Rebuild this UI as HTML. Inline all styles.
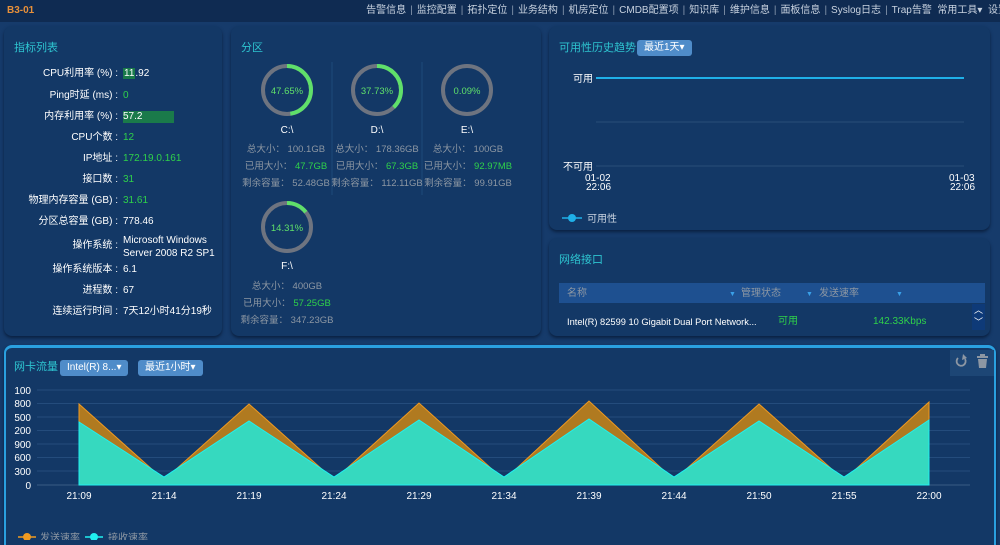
<!DOCTYPE html>
<html><head><meta charset="utf-8"><style>
*{margin:0;padding:0;box-sizing:border-box}
body{width:1000px;height:540px;overflow:hidden;background:#163b6b;font-family:"Liberation Sans","Noto Sans CJK SC",sans-serif;font-size:10px;color:#fff;position:relative}
.top{position:absolute;left:0;top:0;width:1000px;height:22px;background:#0f2b52}
.top .t{position:absolute;left:7px;top:5px;color:#e8903a;font-weight:bold;font-size:10px}
.nav{position:absolute;right:-8px;top:5px;color:#c9d3e0;font-size:10px;white-space:nowrap;line-height:12px}
.nav span{color:#8a9ab0;margin:0 4px}
.p{position:absolute;background:#133866;border-radius:8px;box-shadow:0 2px 3px #0a2040}
.h{position:absolute;color:#2ec4d0;font-size:11px;line-height:14px}
.a{position:absolute;white-space:nowrap;line-height:12px}
.r{position:absolute;text-align:right;width:118px;left:0}
.g{color:#2fd14a}.gr{color:#8d97a3}
.btn{position:absolute;background:#4f8cc9;border-radius:3px;color:#fff;font-size:10px;height:16px;line-height:16px;padding:0 7px}
</style></head><body>
<div class="top"><div class="t">B3-01</div>
<div class="nav">告警信息<span>|</span>监控配置<span>|</span>拓扑定位<span>|</span>业务结构<span>|</span>机房定位<span>|</span>CMDB配置项<span>|</span>知识库<span>|</span>维护信息<span>|</span>面板信息<span>|</span>Syslog日志<span>|</span>Trap告警 &nbsp;常用工具▾ &nbsp;设置</div></div>

<div class="p" style="left:4px;top:26px;width:218px;height:310px">
<div class="h" style="left:10px;top:15px">指标列表</div>
</div>
<div style="position:absolute;left:0;top:0">
<div class="r a" style="top:68px">CPU利用率 (%) :</div><div class="a" style="left:123px;top:68px"><span style="background:#1a7a4a;padding:0 1px">11</span>.92</div>
<div class="r a" style="top:90px">Ping时延 (ms) :</div><div class="a g" style="left:123px;top:90px">0</div>
<div class="r a" style="top:111px">内存利用率 (%) :</div><div class="a" style="left:123px;top:111px;background:#1a7a4a;width:51px">57.2</div>
<div class="r a" style="top:132px">CPU个数 :</div><div class="a g" style="left:123px;top:132px">12</div>
<div class="r a" style="top:153px">IP地址 :</div><div class="a g" style="left:123px;top:153px">172.19.0.161</div>
<div class="r a" style="top:174px">接口数 :</div><div class="a g" style="left:123px;top:174px">31</div>
<div class="r a" style="top:195px">物理内存容量 (GB) :</div><div class="a g" style="left:123px;top:195px">31.61</div>
<div class="r a" style="top:216px">分区总容量 (GB) :</div><div class="a" style="left:123px;top:216px">778.46</div>
<div class="r a" style="top:240px">操作系统 :</div><div class="a" style="left:123px;top:234px;line-height:13px">Microsoft Windows<br>Server 2008 R2 SP1</div>
<div class="r a" style="top:264px">操作系统版本 :</div><div class="a" style="left:123px;top:264px">6.1</div>
<div class="r a" style="top:285px">进程数 :</div><div class="a" style="left:123px;top:285px">67</div>
<div class="r a" style="top:306px">连续运行时间 :</div><div class="a" style="left:123px;top:306px">7天12小时41分19秒</div>
</div>

<div class="p" style="left:231px;top:26px;width:310px;height:310px">
<div class="h" style="left:10px;top:15px">分区</div>
</div>
<svg style="position:absolute;left:0;top:0" width="1000" height="540">
<g fill="none" stroke-width="4">
<circle cx="287" cy="90" r="24" stroke="#6e7480"/><circle cx="287" cy="90" r="24" stroke="#5fe06a" stroke-dasharray="71.9 200" transform="rotate(-90 287 90)"/>
<circle cx="377" cy="90" r="24" stroke="#6e7480"/><circle cx="377" cy="90" r="24" stroke="#5fe06a" stroke-dasharray="56.9 200" transform="rotate(-90 377 90)"/>
<circle cx="467" cy="90" r="24" stroke="#6e7480"/>
<circle cx="287" cy="227" r="24" stroke="#6e7480"/><circle cx="287" cy="227" r="24" stroke="#5fe06a" stroke-dasharray="21.6 200" transform="rotate(-90 287 227)"/>
</g>
<line x1="332" y1="62" x2="332" y2="195" stroke="#1e4a7a"/><line x1="422" y1="62" x2="422" y2="195" stroke="#1e4a7a"/>
<g font-size="9.5" fill="#5fe06a" text-anchor="middle"><text x="287" y="94">47.65%</text><text x="377" y="94">37.73%</text><text x="467" y="94">0.09%</text><text x="287" y="231">14.31%</text></g>
<g font-size="10" fill="#fff" text-anchor="middle"><text x="287" y="133">C:\</text><text x="377" y="133">D:\</text><text x="467" y="133">E:\</text><text x="287" y="269">F:\</text></g>
<g font-size="9.5" fill="#8d97a3" text-anchor="middle">
<text x="286" y="152">总大小： 100.1GB</text><text x="286" y="169">已用大小： <tspan fill="#2fd14a">47.7GB</tspan></text><text x="286" y="186">剩余容量： 52.48GB</text>
<text x="377" y="152">总大小： 178.36GB</text><text x="377" y="169">已用大小： <tspan fill="#2fd14a">67.3GB</tspan></text><text x="377" y="186">剩余容量： 112.11GB</text>
<text x="468" y="152">总大小： 100GB</text><text x="468" y="169">已用大小： <tspan fill="#2fd14a">92.97MB</tspan></text><text x="468" y="186">剩余容量： 99.91GB</text>
<text x="287" y="289">总大小： 400GB</text><text x="287" y="306">已用大小： <tspan fill="#2fd14a">57.25GB</tspan></text><text x="287" y="323">剩余容量： 347.23GB</text>
</g>
</svg>

<div class="p" style="left:549px;top:26px;width:441px;height:204px">
<div class="h" style="left:10px;top:15px">可用性历史趋势</div>
<div class="btn" style="left:88px;top:14px">最近1天▾</div>
</div>
<svg style="position:absolute;left:549px;top:26px" width="441" height="204">
<line x1="47" y1="52" x2="415" y2="52" stroke="#1fb0e8" stroke-width="2"/>
<line x1="47" y1="96" x2="415" y2="96" stroke="#2a4e78"/>
<line x1="47" y1="140" x2="415" y2="140" stroke="#2a4e78"/>
<g font-size="10" fill="#fff"><text x="24" y="56">可用</text><text x="14" y="144">不可用</text>
<text x="36" y="155">01-02</text><text x="37" y="164">22:06</text><text x="400" y="155">01-03</text><text x="401" y="164">22:06</text></g>
<line x1="13" y1="192" x2="33" y2="192" stroke="#1fb0e8" stroke-width="1.5"/><circle cx="23" cy="192" r="4" fill="#1fb0e8"/>
<text x="38" y="196" font-size="10" fill="#c9d3e0">可用性</text>
</svg>

<div class="p" style="left:549px;top:238px;width:441px;height:98px">
<div class="h" style="left:10px;top:15px">网络接口</div>
<div class="a" style="left:10px;top:45px;width:426px;height:20px;background:#1e5090"></div>
<div class="a gr" style="left:18px;top:50px">名称</div><div class="a" style="left:180px;top:51px;color:#3aa0e8;font-size:7px">▼</div>
<div class="a gr" style="left:192px;top:50px">管理状态</div><div class="a" style="left:257px;top:51px;color:#3aa0e8;font-size:7px">▼</div>
<div class="a gr" style="left:270px;top:50px">发送速率</div><div class="a" style="left:347px;top:51px;color:#3aa0e8;font-size:7px">▼</div>
<div class="a" style="left:18px;top:78px;font-size:9.3px;width:202px;overflow:hidden">Intel(R) 82599 10 Gigabit Dual Port Network...</div>
<div class="a g" style="left:229px;top:78px">可用</div>
<div class="a g" style="left:324px;top:78px">142.33Kbps</div>
<div class="a" style="left:423px;top:66px;width:13px;height:26px;background:#0e3a78;color:#fff;font-size:9px;line-height:12px;text-align:center">︿<br>﹀</div>
</div>

<div class="p" style="left:4px;top:345px;width:992px;height:200px;border-top:3px solid #2aa0e0;border-left:2px solid #2aa0e0;border-right:2px solid #2aa0e0;border-radius:8px 8px 0 0">
<div class="h" style="left:8px;top:12px">网卡流量</div>
<div class="btn" style="left:54px;top:12px">Intel(R) 8...▾</div>
<div class="btn" style="left:132px;top:12px">最近1小时▾</div>
<div class="a" style="left:944px;top:2px;width:44px;height:26px;background:#1d4675"></div>
</div>
<svg style="position:absolute;left:0;top:0" width="1000" height="540">
<g fill="none" stroke="#8d97a3" stroke-width="1.8"><path d="M965 359 A4.5 4.5 0 1 1 958 358"/></g>
<path d="M963 354 L967 358 L962 360 Z" fill="#8d97a3"/>
<g fill="#8d97a3"><rect x="977" y="356" width="11" height="2"/><rect x="980" y="354" width="5" height="2"/><path d="M978 359 H987 L986 368 H979 Z"/></g>
<g stroke="#244c7c"><line x1="37" y1="390" x2="970" y2="390"/><line x1="37" y1="403.5" x2="970" y2="403.5"/><line x1="37" y1="417" x2="970" y2="417"/><line x1="37" y1="430.5" x2="970" y2="430.5"/><line x1="37" y1="444" x2="970" y2="444"/><line x1="37" y1="457.5" x2="970" y2="457.5"/><line x1="37" y1="471" x2="970" y2="471"/></g>
<line x1="37" y1="485" x2="970" y2="485" stroke="#3a5c84"/>
<polygon points="79,485 79,404 164,480 249,404 334,480 419,403 504,480 589,401 674,480 759,404 844,480 929,402 929,485" fill="#b07a20" stroke="#f09a20"/>
<polygon points="79,485 79,422 164,477 249,421 334,477 419,420 504,477 589,419 674,477 759,421 844,477 929,420 929,485" fill="#36d9bf" stroke="#20f0f0"/>
<g font-size="10" fill="#fff" text-anchor="end"><text x="31" y="394">100</text><text x="31" y="407">800</text><text x="31" y="421">500</text><text x="31" y="434">200</text><text x="31" y="448">900</text><text x="31" y="461">600</text><text x="31" y="475">300</text><text x="31" y="489">0</text></g>
<g font-size="10" fill="#fff" text-anchor="middle"><text x="79" y="499">21:09</text><text x="164" y="499">21:14</text><text x="249" y="499">21:19</text><text x="334" y="499">21:24</text><text x="419" y="499">21:29</text><text x="504" y="499">21:34</text><text x="589" y="499">21:39</text><text x="674" y="499">21:44</text><text x="759" y="499">21:50</text><text x="844" y="499">21:55</text><text x="929" y="499">22:00</text></g>
<line x1="18" y1="537" x2="36" y2="537" stroke="#f09a20" stroke-width="1.5"/><circle cx="27" cy="537" r="4" fill="#f09a20"/>
<text x="40" y="541" font-size="10" fill="#8d97a3">发送速率</text>
<line x1="85" y1="537" x2="103" y2="537" stroke="#20f0f0" stroke-width="1.5"/><circle cx="94" cy="537" r="4" fill="#20f0f0"/>
<text x="108" y="541" font-size="10" fill="#8d97a3">接收速率</text>
</svg>
</body></html>
